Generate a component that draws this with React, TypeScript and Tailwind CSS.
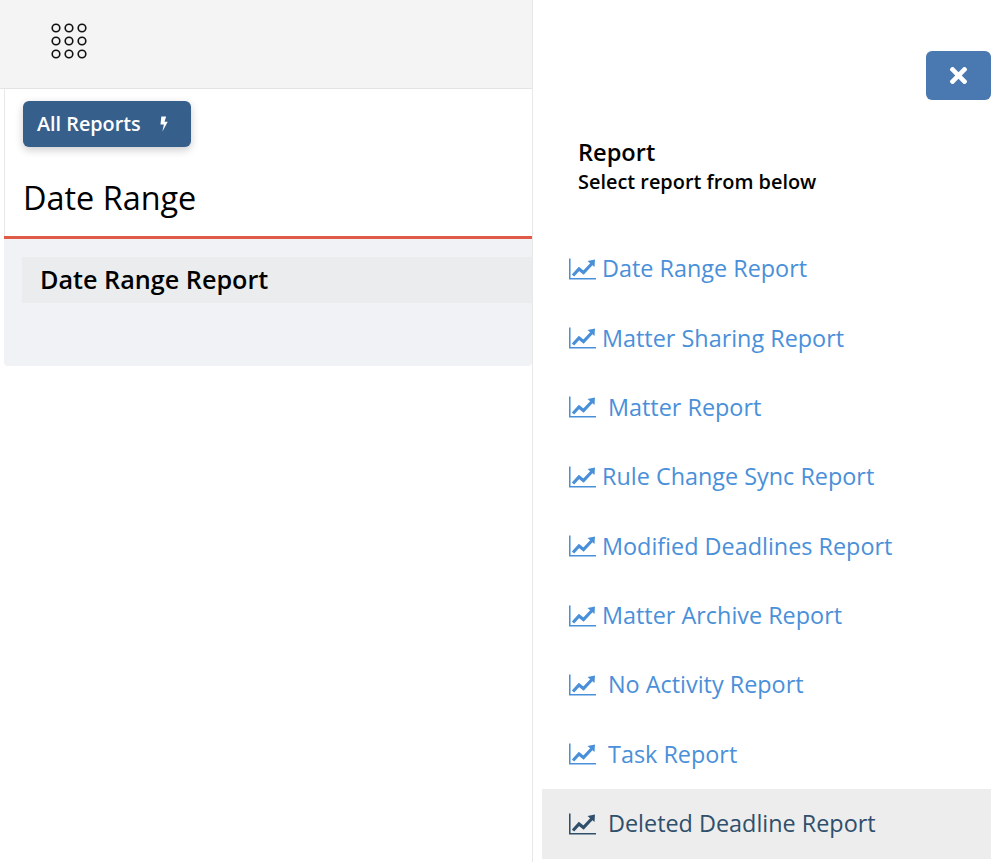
import { FaTimes } from 'react-icons/fa'

const reports = [
    { name: 'Date Range Report', wide: false },
    { name: 'Matter Sharing Report', wide: false },
    { name: 'Matter Report', wide: true },
    { name: 'Rule Change Sync Report', wide: false },
    { name: 'Modified Deadlines Report', wide: false },
    { name: 'Matter Archive Report', wide: false },
    { name: 'No Activity Report', wide: true },
    { name: 'Task Report', wide: true },
    { name: 'Deleted Deadline Report', wide: true, active: true },
]

const AppsIcon = () => (
    <svg width="36" height="36" viewBox="0 0 36 36" fill="none" stroke="#111" strokeWidth="1.6">
        {[5, 18, 31].map((cy) =>
            [5, 18, 31].map((cx) => <circle key={`${cx}-${cy}`} cx={cx} cy={cy} r="3.8" />)
        )}
    </svg>
)

const BoltIcon = () => (
    <svg width="10" height="16" viewBox="0 0 9 15" fill="currentColor" className="ml-[18px]">
        <polygon points="2,0.5 6.5,0.5 5,5.5 8,5.5 3,14.5 4.4,8 1.2,8" />
    </svg>
)

const TrendIcon = ({ className }: { className: string }) => (
    <svg width="27" height="22" viewBox="0 0 27 22" fill="none" stroke="currentColor" className={className}>
        <path d="M0.75 0.5V20.75H27" strokeWidth="1.6" />
        <path d="M4 17.5L10 11L14.5 14.5L23 5.5" strokeWidth="3.2" />
        <polygon points="18.5,3 26,1.5 25.5,9" fill="currentColor" stroke="none" />
    </svg>
)

const ReportRow = ({ name, wide, active }: { name: string; wide: boolean; active?: boolean }) => {
    return (
        <div
            className={`flex h-[69.4px] items-center pl-[27px] text-[23.4px] ${
                active ? 'bg-[#ededed] text-[#2f4f6b]' : 'text-[#4a90d9]'
            }`}
        >
            <TrendIcon className={`shrink-0 ${wide ? 'mr-[12px]' : 'mr-[6px]'}`} />
            <span>{name}</span>
        </div>
    )
}

export default function App() {
    return (
        <div className="flex h-[862px] w-[996px] overflow-hidden bg-white font-['Open_Sans',sans-serif] text-black">
            <div className="w-[532px] shrink-0">
                <div className="flex h-[89px] items-center border-b border-[#e4e4e4] bg-[#f4f4f4] pb-[6px] pl-[51px]">
                    <AppsIcon />
                </div>
                <div className="ml-[4px] border-l border-[#e8e8e8]">
                    <div className="h-[147px] pt-[12px] pl-[18px]">
                        <button className="flex h-[46px] w-[168px] items-center rounded-md bg-[#375f8c] pl-[14px] text-[19.8px] font-semibold text-white shadow-[0_3px_8px_rgba(0,0,0,0.2)]">
                            All Reports
                            <BoltIcon />
                        </button>
                        <h1 className="mt-[28px] text-[32.4px] leading-[44px]">Date Range</h1>
                    </div>
                </div>
                <div className="ml-[4px] h-[130px] rounded-b border-t-[3px] border-[#e05a48] bg-[#f1f2f6] pt-[18px] pl-[18px]">
                    <div className="flex h-[46px] items-center bg-[#ebecee] pl-[18px] text-[25.2px] font-semibold">
                        Date Range Report
                    </div>
                </div>
            </div>
            <div className="h-full w-[459px] shrink-0 border-l border-[#e8e8e8]">
                <div className="flex justify-end pt-[51px]">
                    <button className="flex h-[49px] w-[65px] items-center justify-center rounded-md bg-[#4a78b0] text-white">
                        <FaTimes className="h-[25px] w-[25px]" />
                    </button>
                </div>
                <div className="pt-[36px] pl-[45px]">
                    <h2 className="text-[23.6px] leading-[33px] font-semibold">Report</h2>
                    <p className="text-[19.9px] leading-[26px] font-semibold">Select report from below</p>
                </div>
                <div className="mt-[39px] ml-[9px]">
                    {reports.map((r) => (
                        <ReportRow key={r.name} name={r.name} wide={r.wide} active={r.active} />
                    ))}
                </div>
            </div>
        </div>
    )
}
